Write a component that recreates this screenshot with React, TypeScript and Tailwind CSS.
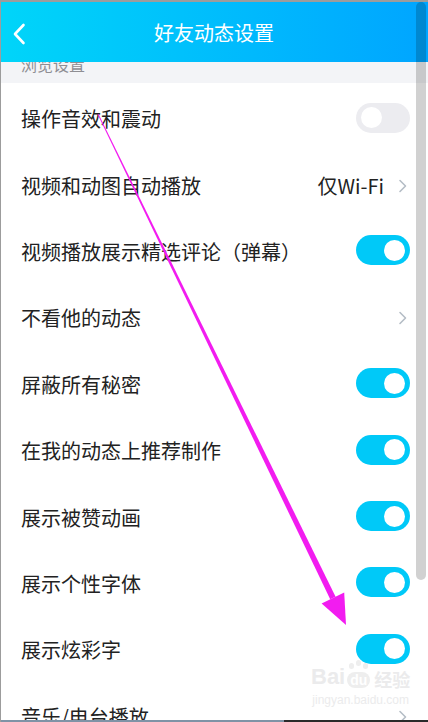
import React from "react";

const FONT = { fontFamily: '"Noto Sans CJK SC", "Noto Sans", sans-serif' };

function Toggle({ on }: { on: boolean }) {
  return on ? (
    <div className="w-[54px] h-[30px] rounded-full bg-[#00c9f8] flex items-center justify-end pr-[5px] mb-[3px]">
      <div className="w-[21px] h-[21px] rounded-full bg-white" />
    </div>
  ) : (
    <div className="w-[54px] h-[30px] rounded-full bg-[#ececf0] flex items-center justify-start pl-[5px] mb-[3px]">
      <div className="w-[21px] h-[21px] rounded-full bg-white" />
    </div>
  );
}

function Chevron() {
  return (
    <svg width="10" height="14" viewBox="0 0 10 14" className="ml-[14px] mr-[2px]">
      <polyline points="2,1.5 7.5,7 2,12.5" fill="none" stroke="#b5bdc6" strokeWidth="1.6" strokeLinecap="round" strokeLinejoin="round" />
    </svg>
  );
}

type Row = { label: string; kind: "on" | "off" | "link"; value?: string };

const rows: Row[] = [
  { label: "操作音效和震动", kind: "off" },
  { label: "视频和动图自动播放", kind: "link", value: "仅Wi-Fi" },
  { label: "视频播放展示精选评论（弹幕）", kind: "on" },
  { label: "不看他的动态", kind: "link" },
  { label: "屏蔽所有秘密", kind: "on" },
  { label: "在我的动态上推荐制作", kind: "on" },
  { label: "展示被赞动画", kind: "on" },
  { label: "展示个性字体", kind: "on" },
  { label: "展示炫彩字", kind: "on" },
  { label: "音乐/电台播放", kind: "link" },
];

export default function App() {
  return (
    <div className="relative w-[428px] h-[722px] overflow-hidden bg-white border-t-2 border-l border-[#9c9c9c]" style={FONT}>
      {/* header */}
      <div className="relative z-10 h-[60px] w-full bg-gradient-to-r from-[#00d5f9] to-[#00a5ff] flex items-center justify-center">
        <svg width="14" height="22" viewBox="0 0 14 22" className="absolute left-[11px] top-[21px]">
          <polyline points="11.5,2 3,11 11.5,20" fill="none" stroke="white" strokeWidth="2.6" strokeLinecap="round" strokeLinejoin="round" />
        </svg>
        <span className="text-white text-[20px] leading-none mt-[2px] -ml-[1px]">好友动态设置</span>
      </div>

      {/* section header, partially scrolled under the header */}
      <div className="h-[21px] bg-[#f3f4f7] overflow-hidden pl-[20px]">
        <div className="text-[16px] leading-[16px] text-[#8e8e93] -mt-[6px]">浏览设置</div>
      </div>

      {/* rows */}
      <div className="pt-[3px] pr-[18px] pl-[20px]">
        {rows.map((r) => (
          <div key={r.label} className="h-[66.4px] flex items-center">
            <span className="flex-1 text-[20px] leading-none text-[#222222] whitespace-nowrap">{r.label}</span>
            {r.kind === "on" && <Toggle on />}
            {r.kind === "off" && <Toggle on={false} />}
            {r.kind === "link" && (
              <div className="flex items-center">
                {r.value && <span className="text-[20px] leading-none text-[#222222]">{r.value}</span>}
                <Chevron />
              </div>
            )}
          </div>
        ))}
      </div>

      {/* scrollbar */}
      <div className="absolute z-20 left-[415px] top-0 w-[10px] h-[578px] rounded-full bg-black/[0.18]" />

      {/* baidu watermark */}
      <div className="absolute left-[310px] top-[664px] flex flex-col items-center text-[#ebebec] pointer-events-none" style={{ fontFamily: '"Liberation Sans", "Noto Sans CJK SC", sans-serif' }}>
        <div className="flex items-end gap-[2px] leading-none">
          <span className="text-[22px] font-bold">Bai</span>
          <span className="relative text-[14px] font-bold bg-[#eeeeee] text-white rounded-full px-[3px] py-[1px]">du
            <span className="absolute -top-[9px] left-[2px] w-[5px] h-[6px] rounded-full bg-[#eeeeee]" />
            <span className="absolute -top-[12px] left-[9px] w-[5px] h-[6px] rounded-full bg-[#eeeeee]" />
            <span className="absolute -top-[9px] left-[16px] w-[5px] h-[6px] rounded-full bg-[#eeeeee]" />
          </span>
          <span className="text-[18px] font-bold ml-[2px]" style={FONT}>经验</span>
        </div>
        <span className="text-[12px] mt-[3px]">jingyan.baidu.com</span>
      </div>

      {/* annotation arrow */}
      <svg className="absolute z-30 left-0 top-0 pointer-events-none" width="428" height="722" viewBox="0 0 428 722">
        <polygon points="97.4,111.8 96.6,112.2 329.2,597.3 334.6,594.7" fill="#f21cf0" />
        <polygon points="345,623 320.6,601.5 343.2,590.5" fill="#f21cf0" />
      </svg>

      {/* bottom edge */}
      <div className="absolute z-30 left-0 bottom-0 w-full h-[2px] flex">
        <div className="w-[283px] bg-[#7f93a6]" />
        <div className="flex-1 bg-[#2a2a2a]" />
      </div>
    </div>
  );
}
